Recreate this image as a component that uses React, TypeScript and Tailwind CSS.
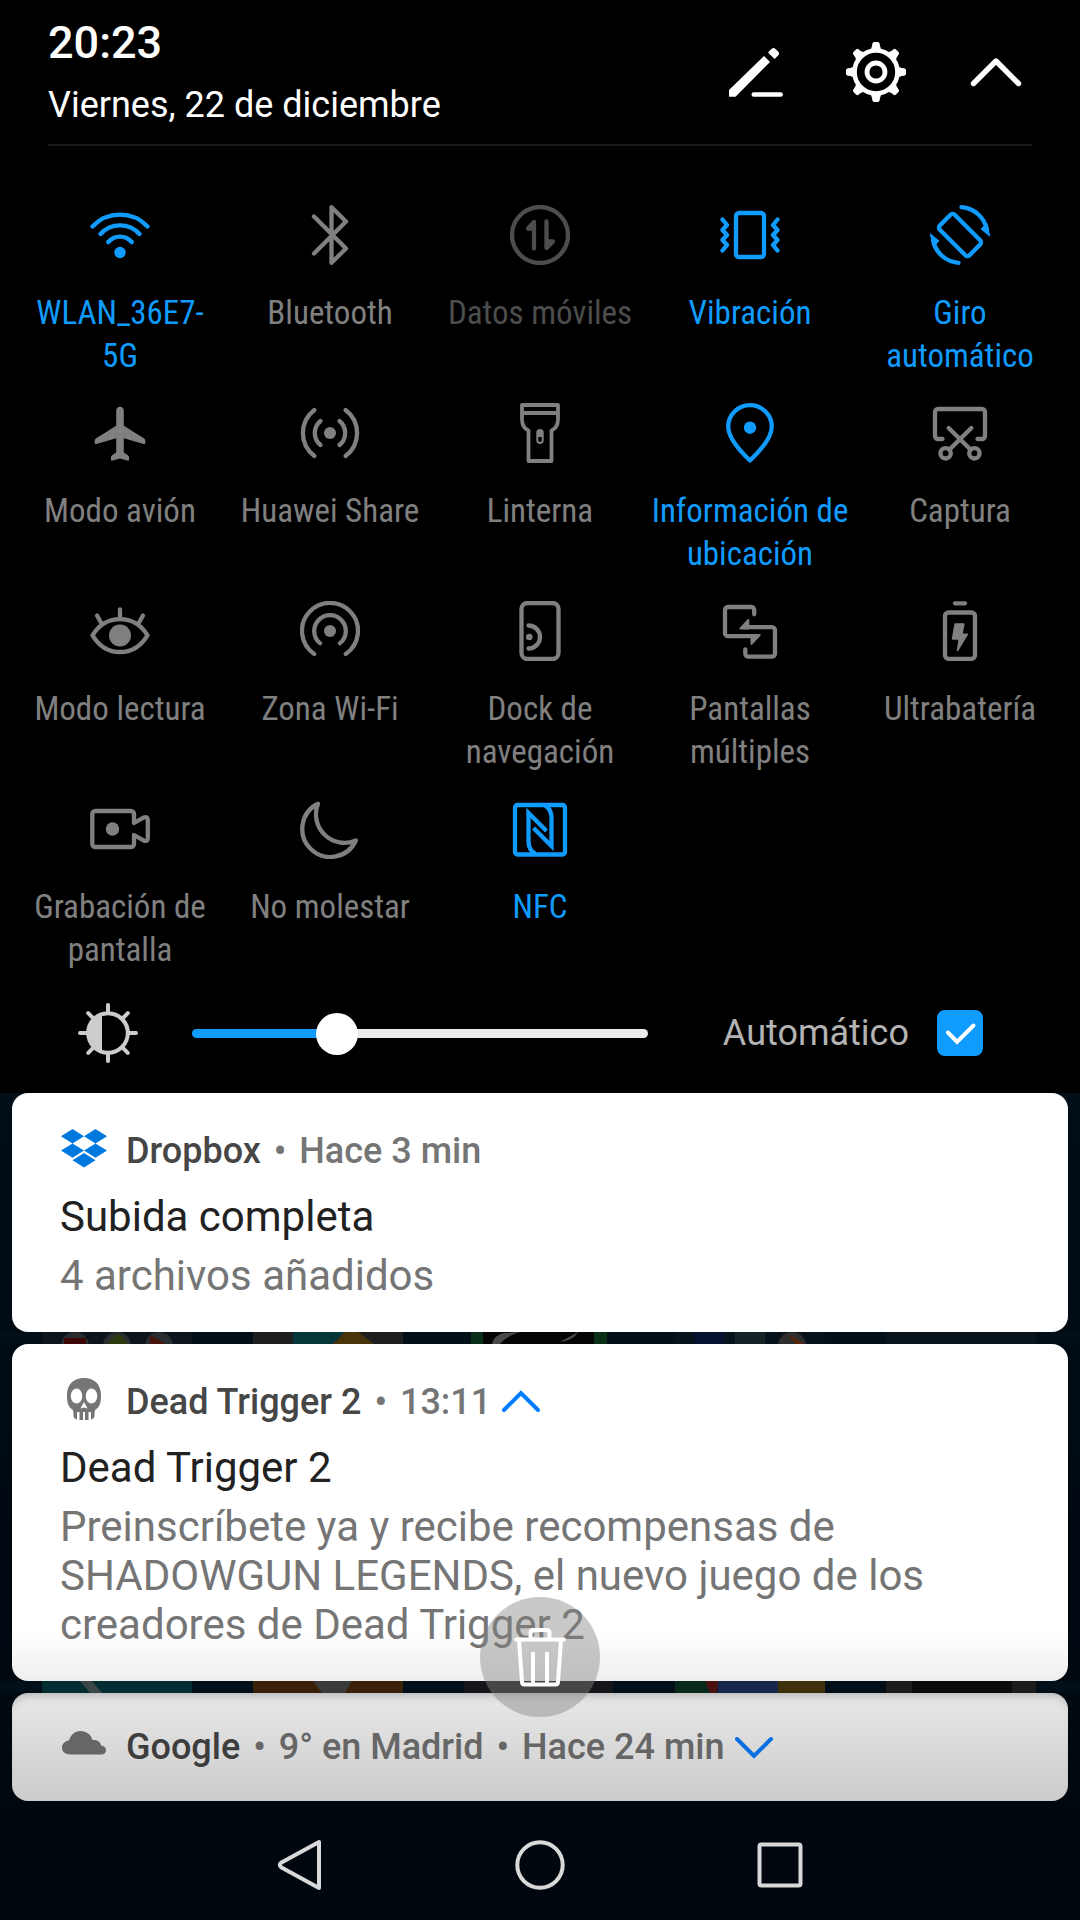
import { useState, type CSSProperties, type ReactNode } from "react";
import clsx from "clsx";

type TileState = "on" | "off" | "disabled";

interface Tile {
  label: string;
  state: TileState;
  icon: ReactNode;
}

const tiles: Tile[] = [
  {
    label: "WLAN_36E7-5G",
    state: "on",
    icon: (
      <>
        <path d="M2.5 21.5A38 38 0 0 1 57.5 21.5M10.5 29A26.3 26.3 0 0 1 49.5 29M18.3 37A15.3 15.3 0 0 1 41.7 37" />
        <circle cx="30" cy="47.5" r="5.7" fill="currentColor" stroke="none" />
      </>
    ),
  },
  {
    label: "Bluetooth",
    state: "off",
    icon: <path d="M14 11.5L46 43.5L31.5 57.8V2.2L46 16.5L14 48.5" />,
  },
  {
    label: "Datos móviles",
    state: "disabled",
    icon: (
      <>
        <circle cx="30" cy="30" r="28" />
        <path d="M24 43.5V17L18 23.5H24M36.5 16.5V43L43 36.5H36.5" />
      </>
    ),
  },
  {
    label: "Vibración",
    state: "on",
    icon: (
      <>
        <rect x="16" y="8" width="28" height="44" rx="3" />
        <path d="M2.5 14.5L7 20L2.5 25L7 30L2.5 35L7 40L2.5 45.5M57.5 14.5L53 20L57.5 25L53 30L57.5 35L53 40L57.5 45.5" />
      </>
    ),
  },
  {
    label: "Giro automático",
    state: "on",
    icon: (
      <>
        <rect x="19.5" y="9" width="21" height="42" rx="3" transform="rotate(-45 30 30)" />
        <path d="M31.5 2.2A28 28 0 0 1 57 25M28.5 57.8A28 28 0 0 1 3 35" />
        <path
          d="M59.5 31L51 24L56.5 18.5ZM0.5 29L9 36L3.5 41.5Z"
          fill="currentColor"
          strokeWidth="1"
        />
      </>
    ),
  },
  {
    label: "Modo avión",
    state: "off",
    icon: (
      <path
        d="M30 3.7C27.6 3.7 26.2 5.4 26.2 7.8V22.7L5.8 35.4Q4.7 36.2 4.7 37.4V39.8Q4.7 41.4 6.4 41L26.2 35.3V49.5L21.8 52.4Q21 53 21 54V57Q21 58 22 57.7L30 55.5L38 57.7Q39 58 39 57V54Q39 53 38.2 52.4L33.8 49.5V35.3L53.6 41Q55.3 41.4 55.3 39.8V37.4Q55.3 36.2 54.2 35.4L33.8 22.7V7.8C33.8 5.4 32.4 3.7 30 3.7Z"
        fill="currentColor"
        stroke="none"
      />
    ),
  },
  {
    label: "Huawei Share",
    state: "off",
    icon: (
      <>
        <path d="M14.4 7A28.8 28.8 0 0 0 14.4 53M45.6 7A28.8 28.8 0 0 1 45.6 53M20.5 18A15.5 15.5 0 0 0 20.5 42M39.5 18A15.5 15.5 0 0 1 39.5 42" />
        <circle cx="30" cy="30" r="6" fill="currentColor" stroke="none" />
      </>
    ),
  },
  {
    label: "Linterna",
    state: "off",
    icon: (
      <>
        <path
          d="M12 2H48V16Q48 25 41.5 27.5V58H18.5V27.5Q12 25 12 16ZM12 10H48"
          strokeWidth="3.8"
        />
        <rect x="27.3" y="27" width="5.4" height="13" rx="2.7" strokeWidth="2" />
        <path d="M27.3 34V30a2.7 2.7 0 0 1 5.4 0V34Z" fill="currentColor" stroke="none" />
      </>
    ),
  },
  {
    label: "Información de ubicación",
    state: "on",
    icon: (
      <>
        <path d="M30 57.5C20 48 8.2 35 8.2 23.5A21.8 21.3 0 0 1 51.8 23.5C51.8 35 40 48 30 57.5Z" />
        <circle cx="30" cy="24.7" r="6.2" fill="currentColor" stroke="none" />
      </>
    ),
  },
  {
    label: "Captura",
    state: "off",
    icon: (
      <>
        <path d="M12.5 36H8a3 3 0 0 1-3-3V9a3 3 0 0 1 3-3H52a3 3 0 0 1 3 3V33a3 3 0 0 1-3 3H47.5" />
        <path d="M18.7 25L40.7 46.8M41.3 25L19.3 46.8" />
        <circle cx="15.6" cy="50.3" r="5.2" />
        <circle cx="44.4" cy="50.3" r="5.2" />
      </>
    ),
  },
  {
    label: "Modo lectura",
    state: "off",
    icon: (
      <>
        <path d="M2.5 34.3C9 24 18 18.2 30 18.2S51 24 57.5 34.3C51 45 42 51 30 51S9 45 2.5 34.3Z" />
        <path d="M30 8.5V17M7 14.5L11.5 22.5M53 14.5L48.5 22.5" />
        <circle cx="30" cy="34.5" r="11" fill="currentColor" stroke="none" />
      </>
    ),
  },
  {
    label: "Zona Wi-Fi",
    state: "off",
    icon: (
      <>
        <path d="M14.2 53A28 28 0 1 1 45.8 53M20 42.2A15.8 15.8 0 1 1 40 42.2" />
        <circle cx="30" cy="30" r="6" fill="currentColor" stroke="none" />
      </>
    ),
  },
  {
    label: "Dock de navegación",
    state: "off",
    icon: (
      <>
        <rect x="11.5" y="2" width="37" height="56" rx="6" />
        <path d="M18.5 24.5A11.5 11.5 0 0 1 18.5 47.5" />
        <circle cx="19.3" cy="36" r="3.3" fill="currentColor" stroke="none" />
      </>
    ),
  },
  {
    label: "Pantallas múltiples",
    state: "off",
    icon: (
      <>
        <path d="M34.2 13.3V9a3 3 0 0 0-3-3H8a3 3 0 0 0-3 3V32.2a3 3 0 0 0 3 3H36M25.3 48.3V52.6a3 3 0 0 0 3 3H52a3 3 0 0 0 3-3V29.2a3 3 0 0 0-3-3H24" />
        <path
          d="M20.5 27.5L28.3 19V27.5ZM39.7 34L31.5 42.8V34Z"
          fill="currentColor"
          strokeWidth="2"
        />
      </>
    ),
  },
  {
    label: "Ultrabatería",
    state: "off",
    icon: (
      <>
        <rect x="15" y="11.5" width="30" height="46.3" rx="3.5" />
        <path d="M25 2.3H35" />
        <path
          d="M25.2 23H33.8L32 33.2H37.5L27.5 49.5L29.3 38H22.5Z"
          fill="currentColor"
          strokeWidth="1.5"
        />
      </>
    ),
  },
  {
    label: "Grabación de pantalla",
    state: "off",
    icon: (
      <>
        <path d="M44 24L53.5 18.6Q57.8 17 57.8 21V39Q57.8 43 53.5 41.4L44 36V45a3 3 0 0 1-3 3H5.3a3 3 0 0 1-3-3V15a3 3 0 0 1 3-3H41a3 3 0 0 1 3 3Z" />
        <circle cx="22.5" cy="30" r="6.7" fill="currentColor" stroke="none" />
      </>
    ),
  },
  {
    label: "No molestar",
    state: "off",
    icon: <path d="M18 4.8A28 28 0 1 0 55.8 41.5A28.5 28.5 0 0 1 18 4.8Z" />,
  },
  {
    label: "NFC",
    state: "on",
    icon: (
      <>
        <rect x="5" y="6" width="50" height="49.5" rx="2.5" />
        <path
          d="M25.5 55C20 52 18.5 48 18.5 42V14L36.5 32M34.5 6C40 9 41.5 13 41.5 19V47L23.5 29"
          strokeLinecap="butt"
          strokeLinejoin="miter"
        />
      </>
    ),
  },
];

const tileColor: Record<TileState, string> = {
  on: "text-[#109bff]",
  off: "text-[#808080]",
  disabled: "text-[#4d4d4d]",
};

function QuickTile({ tile }: { tile: Tile }) {
  return (
    <button
      type="button"
      disabled={tile.state === "disabled"}
      className={clsx(
        "flex flex-col items-center gap-[26px] px-[5px] pb-[26px]",
        tileColor[tile.state]
      )}
    >
      <svg
        className="size-[60px]"
        viewBox="0 0 60 60"
        fill="none"
        stroke="currentColor"
        strokeWidth="4.3"
        strokeLinecap="round"
        strokeLinejoin="round"
        aria-hidden="true"
      >
        {tile.icon}
      </svg>
      <span className="h-[86px] text-center font-['Roboto_Condensed',Roboto,sans-serif] text-[33px] leading-[43px]">
        {tile.label}
      </span>
    </button>
  );
}

function Header() {
  return (
    <header className="mx-12 flex items-center justify-between border-b-2 border-[#1a1a1a] pt-4 pb-[17px] text-white">
      <div>
        <p className="text-[45px] leading-[54px] font-medium">20:23</p>
        <p className="mt-[13px] text-4xl leading-[44px]">Viernes, 22 de diciembre</p>
      </div>
      <div className="mr-1.5 flex gap-[60px]">
        <button type="button" aria-label="Editar">
          <svg className="size-[60px]" viewBox="0 0 60 60" aria-hidden="true">
            <path d="M3 48L38 14L44 20L9.5 54.7H3Z" fill="currentColor" />
            <path
              d="M43 10.5L46.2 7.4Q47.5 6 48.8 7.4L51.8 10.4Q53 11.6 51.8 12.8L48.6 16Z"
              fill="currentColor"
              stroke="currentColor"
              strokeWidth="1.5"
              strokeLinejoin="round"
            />
            <path d="M27.8 52.5H54.6" stroke="currentColor" strokeWidth="4.6" strokeLinecap="round" />
          </svg>
        </button>
        <button type="button" aria-label="Ajustes">
          <svg
            className="size-[60px]"
            viewBox="0 0 60 60"
            fill="none"
            stroke="currentColor"
            aria-hidden="true"
          >
            <circle cx="30" cy="30" r="21.5" strokeWidth="4.6" />
            <circle cx="30" cy="30" r="9" strokeWidth="4.8" />
            {[0, 45, 90, 135, 180, 225, 270, 315].map((angle) => (
              <path
                key={angle}
                d="M24 8.5Q26 7 26.5 4L27 1.2Q27.2 0.5 27.9 0.5H32.1Q32.8 0.5 33 1.2L33.5 4Q34 7 36 8.5Z"
                fill="currentColor"
                strokeWidth="1"
                transform={`rotate(${angle} 30 30)`}
              />
            ))}
          </svg>
        </button>
        <button type="button" aria-label="Contraer panel">
          <svg
            className="size-[60px]"
            viewBox="0 0 60 60"
            fill="none"
            stroke="currentColor"
            strokeWidth="5.4"
            strokeLinecap="round"
            strokeLinejoin="round"
            aria-hidden="true"
          >
            <path d="M7.5 41.5L30 19L52.5 41.5" />
          </svg>
        </button>
      </div>
    </header>
  );
}

function BrightnessRow() {
  const [brightness, setBrightness] = useState(30);
  const [auto, setAuto] = useState(true);

  return (
    <div className="flex h-[72px] items-center pr-[97px] pl-[78px]">
      <svg className="size-[60px]" viewBox="0 0 60 60" fill="none" stroke="#cccccc" aria-hidden="true">
        <circle cx="30" cy="30" r="19.8" strokeWidth="4" />
        <path d="M23.5 11.5A19.5 19.5 0 0 0 23.5 48.5Z" fill="#cccccc" />
        {[0, 45, 90, 135, 180, 225, 270, 315].map((angle) => (
          <path
            key={angle}
            d="M30 9V2"
            strokeWidth="4"
            strokeLinecap="round"
            transform={`rotate(${angle} 30 30)`}
          />
        ))}
      </svg>
      <input
        type="range"
        aria-label="Brillo"
        value={brightness}
        onChange={(e) => setBrightness(Number(e.target.value))}
        style={{ "--fill": `${brightness}%` } as CSSProperties}
        className="mr-[75px] ml-[54px] h-[42px] min-w-0 flex-1 appearance-none bg-transparent [&::-webkit-slider-runnable-track]:h-[9px] [&::-webkit-slider-runnable-track]:rounded-full [&::-webkit-slider-runnable-track]:bg-[linear-gradient(to_right,#109bff_var(--fill),#ebebeb_var(--fill))] [&::-webkit-slider-thumb]:-mt-4 [&::-webkit-slider-thumb]:size-[42px] [&::-webkit-slider-thumb]:appearance-none [&::-webkit-slider-thumb]:rounded-full [&::-webkit-slider-thumb]:bg-white"
      />
      <label htmlFor="auto-brightness" className="text-4xl leading-[44px] text-[#b3b3b3]">
        Automático
      </label>
      <span className="relative ml-7 size-[46px]">
        <input
          id="auto-brightness"
          type="checkbox"
          checked={auto}
          onChange={(e) => setAuto(e.target.checked)}
          className="peer block size-[46px] appearance-none rounded-lg border-2 border-[#808080] checked:border-[#109bff] checked:bg-[#109bff]"
        />
        <svg
          className="pointer-events-none absolute inset-0 hidden peer-checked:block"
          viewBox="0 0 46 46"
          fill="none"
          stroke="white"
          strokeWidth="4"
          strokeLinecap="round"
          aria-hidden="true"
        >
          <path d="M11 22.5L20 32L36.5 15.5" />
        </svg>
      </span>
    </div>
  );
}

/* Dimmed home screen folders that show through between two cards */
function FolderStrip({ children }: { children: ReactNode }) {
  return (
    <svg
      className="block h-3 w-full bg-[#020e18]"
      viewBox="0 0 1080 12"
      preserveAspectRatio="none"
      aria-hidden="true"
    >
      {children}
    </svg>
  );
}

interface NotificationProps {
  icon: ReactNode;
  app: string;
  meta: string[];
  chevron?: "up" | "down";
  collapsed?: boolean;
  className?: string;
  children?: ReactNode;
}

function Notification({ icon, app, meta, chevron, collapsed, className, children }: NotificationProps) {
  return (
    <article
      className={clsx(
        "mx-3 rounded-2xl px-12 pb-8",
        collapsed ? "pt-8" : "pt-9",
        className
      )}
    >
      <div
        className={clsx(
          "flex items-center text-4xl leading-[44px] font-medium",
          collapsed ? "text-[#666666]" : "text-[#757575]"
        )}
      >
        <svg className="mr-[18px] h-11 w-12 overflow-visible" viewBox="0 0 48 44" aria-hidden="true">
          {icon}
        </svg>
        <p>
          <span className={collapsed ? "text-[#3d3d3d]" : "text-[#464646]"}>{app}</span>
          {meta.map((item) => (
            <span key={item}>
              {" "}
              <span className="mx-1">•</span> {item}
            </span>
          ))}
        </p>
        {chevron && (
          <button
            type="button"
            aria-label={chevron === "up" ? "Contraer" : "Expandir"}
            className={clsx("ml-2.5", collapsed ? "text-[#0a6fe0]" : "text-[#007dff]")}
          >
            <svg
              className={clsx("h-6 w-10", chevron === "down" && "rotate-180")}
              viewBox="0 0 40 24"
              fill="none"
              stroke="currentColor"
              strokeWidth="4"
              strokeLinecap="round"
              aria-hidden="true"
            >
              <path d="M3 20L20 3L37 20" />
            </svg>
          </button>
        )}
      </div>
      {children}
    </article>
  );
}

function MessageBody({ title, text }: { title: string; text: string }) {
  return (
    <>
      <h2 className="mt-[19px] text-[42px] leading-[49px] text-[#212121]">{title}</h2>
      <p className="mt-2.5 text-[42px] leading-[49px] text-[#757575]">{text}</p>
    </>
  );
}

function NavigationBar() {
  return (
    <nav className="flex h-[119px] items-center justify-center gap-[180px] pt-2 text-[#d9d9d9]">
      <button type="button" aria-label="Atrás">
        <svg className="size-[60px]" viewBox="0 0 60 60" fill="none" stroke="currentColor" strokeWidth="4" strokeLinejoin="round" aria-hidden="true">
          <path d="M49 7V53L11.5 32.5Q8 30 11.5 27.5Z" />
        </svg>
      </button>
      <button type="button" aria-label="Inicio">
        <svg className="size-[60px]" viewBox="0 0 60 60" fill="none" stroke="currentColor" strokeWidth="4" aria-hidden="true">
          <circle cx="30" cy="30" r="22.7" />
        </svg>
      </button>
      <button type="button" aria-label="Recientes">
        <svg className="size-[60px]" viewBox="0 0 60 60" fill="none" stroke="currentColor" strokeWidth="4" aria-hidden="true">
          <rect x="9.5" y="9.5" width="41" height="41" rx="2" />
        </svg>
      </button>
    </nav>
  );
}

export default function App() {
  return (
    <main className="min-h-screen bg-linear-to-b from-[#000f1a] from-50% to-[#00060d] font-[Roboto,sans-serif]">
      <section className="bg-black pb-6">
        <Header />
        <div className="grid grid-cols-5 px-[15px] pt-[59px]">
          {tiles.map((tile) => (
            <QuickTile key={tile.label} tile={tile} />
          ))}
        </div>
        <BrightnessRow />
      </section>

      <section className="relative">
        <Notification
          className="bg-white"
          app="Dropbox"
          meta={["Hace 3 min"]}
          icon={
            <path
              d="M12.5 0L24 7.2L12.5 14.4L1 7.2ZM35.5 0L47 7.2L35.5 14.4L24 7.2ZM12.5 14.4L24 21.6L12.5 28.8L1 21.6ZM35.5 14.4L47 21.6L35.5 28.8L24 21.6ZM24 24L35.5 31.2L24 38.4L12.5 31.2Z"
              fill="#0079de"
            />
          }
        >
          <MessageBody title="Subida completa" text="4 archivos añadidos" />
        </Notification>

        <FolderStrip>
          <rect x="42" width="150" height="12" fill="#0b151b" />
          <circle cx="75" cy="14" r="14" fill="#2a2d2f" />
          <rect x="64" y="6" width="22" height="6" fill="#3d0505" />
          <circle cx="117" cy="14" r="14" fill="#2a2d2f" />
          <path d="M108 12L115 3H121L128 12Z" fill="#2c3a10" />
          <circle cx="159" cy="14" r="14" fill="#2a2d2f" />
          <path d="M150 12V3L166 12Z" fill="#45150c" />
          <rect x="253" width="150" height="12" fill="#1e1e1e" />
          <path d="M293 0H345L333 12H293Z" fill="#06353a" />
          <path d="M345 0H358L374 12H333Z" fill="#49330a" />
          <rect x="471" width="136" height="12" fill="#0a2f18" />
          <rect x="483" width="111" height="12" fill="#050505" />
          <path d="M492 12Q494 3 504 1L520 0Q506 4 500 12ZM560 10Q574 8 578 0" fill="#4a4a4a" />
          <rect x="675" width="150" height="12" fill="#07131c" />
          <rect x="694" width="30" height="12" fill="#06102f" />
          <rect x="735" width="30" height="12" fill="#152226" />
          <circle cx="792" cy="14" r="14" fill="#2d2d2d" />
          <path d="M788 2L804 12H796Z" fill="#5a2408" />
          <rect x="886" width="150" height="12" fill="#08131b" />
        </FolderStrip>

        <Notification
          className="bg-linear-to-b from-white from-85% to-[#eeeeee]"
          app="Dead Trigger 2"
          meta={["13:11"]}
          chevron="up"
          icon={
            <>
              <path
                d="M24 -2C13 -2 7 5 7 15C7 22 8 26 11 28.5C13 30 13.5 31 13.5 33V36C13.5 38 15 39 17 39.5V32H19.5V40H23V32H25V40H28.5V32H31V39.5C33 39 34.5 38 34.5 36V33C34.5 31 35 30 37 28.5C40 26 41 22 41 15C41 5 35 -2 24 -2Z"
                fill="#757575"
              />
              <ellipse cx="16.5" cy="16" rx="5.8" ry="7.6" fill="white" />
              <ellipse cx="31.5" cy="16" rx="5.8" ry="7.6" fill="white" />
              <path d="M24 22L27.5 28.5L24 27.5L20.5 28.5Z" fill="white" />
            </>
          }
        >
          <MessageBody
            title="Dead Trigger 2"
            text="Preinscríbete ya y recibe recompensas de SHADOWGUN LEGENDS, el nuevo juego de los creadores de Dead Trigger 2"
          />
        </Notification>

        <FolderStrip>
          <rect x="42" width="150" height="12" fill="#032d30" />
          <path d="M80 0H92L102 12H90Z" fill="#3b4747" />
          <rect x="253" width="150" height="12" fill="#3a2009" />
          <path d="M313 0H352L345 12H322Z" fill="#3a3a3a" />
          <rect x="464" width="149" height="12" fill="#141619" />
          <rect x="675" width="42" height="12" fill="#08291a" />
          <path d="M705 0H720L716 12H710Z" fill="#4a1310" />
          <rect x="718" width="60" height="12" fill="#17264a" />
          <rect x="778" width="47" height="12" fill="#3d310d" />
          <rect x="886" width="150" height="12" fill="#1c1c1d" />
          <rect x="912" width="100" height="12" fill="#0c0b0b" />
        </FolderStrip>

        <Notification
          collapsed
          className="bg-linear-to-b from-[#e8e8e8] to-[#cccccc] shadow-[inset_0_8px_10px_-6px_rgba(0,0,0,0.25)]"
          app="Google"
          meta={["9° en Madrid", "Hace 24 min"]}
          chevron="down"
          icon={
            <path
              d="M10 29.5C5 29.5 2 26.5 2 22.5C2 18.5 5 16 9 15.5C11 9.5 15 6 20.5 6C26.5 6 31 9.5 32.5 15C38 15 40.5 17 41 20.5C44 21 46 22.5 46 25C46 28 44 29.5 41 29.5Z"
              fill="#666666"
            />
          }
        />

        <button
          type="button"
          aria-label="Borrar notificaciones"
          className="absolute bottom-[84px] left-1/2 flex size-[120px] -translate-x-1/2 items-center justify-center rounded-full bg-[#848484]/44"
        >
          <svg
            className="size-[60px]"
            viewBox="0 0 60 60"
            fill="none"
            stroke="white"
            strokeWidth="4"
            strokeLinecap="round"
            strokeLinejoin="round"
            aria-hidden="true"
          >
            <path d="M6 12.5H54M20.5 11V6Q20.5 3 23.5 3H36.5Q39.5 3 39.5 6V11M9 14L12 55Q12.2 57.5 14.5 57.5H45.5Q47.8 57.5 48 55L51 14" />
            <path d="M23 26.5V55M37 26.5V55" />
          </svg>
        </button>
      </section>

      <NavigationBar />
    </main>
  );
}
